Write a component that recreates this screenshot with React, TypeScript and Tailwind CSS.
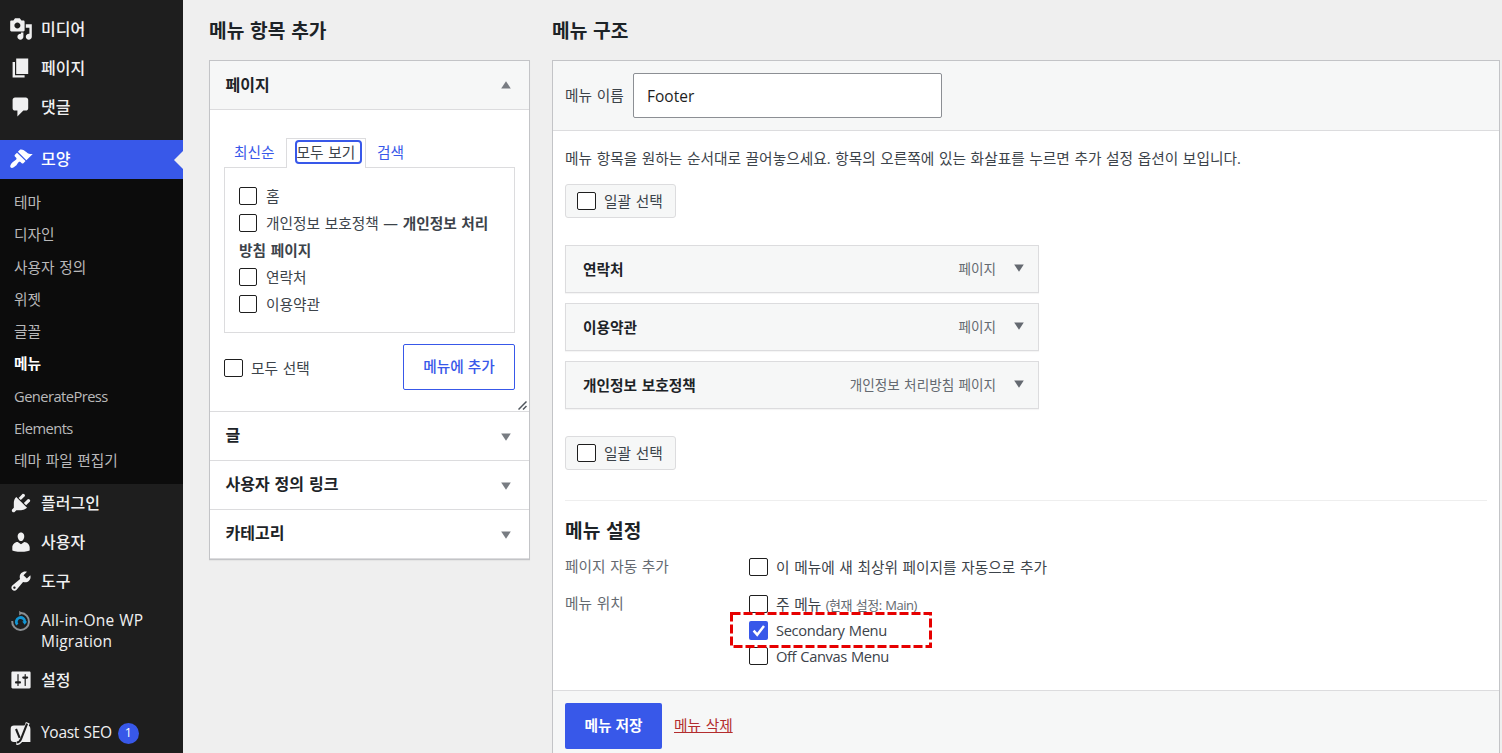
import React from 'react';

interface NavEntry {
  label: string;
  icon: React.ReactNode;
}

const Dashicon: React.FC<{ d: string }> = ({ d }) => (
  <svg viewBox="0 0 20 20" className="w-6 h-6 shrink-0" fill="currentColor">
    <path d={d} />
  </svg>
);

const icons = {
  media:
    'M13 11V4c0-.55-.45-1-1-1h-1.67L9 1H5L3.67 3H2c-.55 0-1 .45-1 1v7c0 .55.45 1 1 1h10c.55 0 1-.45 1-1zM7 4.5c1.38 0 2.5 1.12 2.5 2.5S8.38 9.5 7 9.5 4.5 8.38 4.5 7 5.62 4.5 7 4.5zM14 6h5v10.5c0 1.38-1.12 2.5-2.5 2.5S14 17.88 14 16.5s1.12-2.5 2.5-2.5c.17 0 .34.02.5.05V9h-3V6zm-4 8.05V13h2v3.5c0 1.38-1.12 2.5-2.5 2.5S7 17.88 7 16.5 8.12 14 9.5 14c.17 0 .34.02.5.05z',
  page: 'M6 15V2h10v13H6zm-1 1h8v2H3V5h2v11z',
  comments:
    'M5 2h9c1.1 0 2 .9 2 2v7c0 1.1-.9 2-2 2h-2l-5 5v-5H5c-1.1 0-2-.9-2-2V4c0-1.1.9-2 2-2z',
  appearance:
    'M14.48 11.06L7.41 3.99l1.5-1.5c.5-.56 2.3-.47 3.51.32 1.21.8 1.43 1.28 2.91 2.1 1.18.64 2.45 1.26 4.45.85zm-.71.71L6.7 4.7 4.93 6.47c-.39.39-.39 1.02 0 1.41l1.06 1.06c.39.39.39 1.03 0 1.42-.6.6-1.43 1.11-2.21 1.69-.35.26-.7.53-1.01.84C1.43 14.23.4 16.08 1.4 17.07c.99 1 2.84-.03 4.18-1.36.31-.31.58-.66.85-1.02.57-.78 1.08-1.61 1.69-2.21.39-.39 1.02-.39 1.41 0l1.06 1.06c.39.39 1.02.39 1.41 0z',
  plugins:
    'M13.11 4.36L9.87 7.6 8 5.73l3.24-3.24c.35-.34 1.05-.2 1.56.32.52.51.66 1.21.31 1.55zm-8 1.77l.91-1.12 9.01 9.01-1.19.84c-.71.71-2.63 1.16-3.82 1.16H6.14L4.9 17.26c-.59.59-1.54.59-2.12 0-.59-.58-.59-1.53 0-2.12l1.24-1.24v-3.88c0-1.13.4-3.19 1.09-3.89zm7.26 3.97l3.24-3.24c.34-.35 1.04-.21 1.55.31.52.51.66 1.21.31 1.55l-3.24 3.25z',
  users:
    'M10 9.25c-2.27 0-2.73-3.44-2.73-3.44C7 4.02 7.82 2 9.97 2c2.16 0 2.98 2.02 2.71 3.81 0 0-.41 3.44-2.68 3.44zm0 2.57L12.72 10c2.39 0 4.52 2.33 4.52 4.53v2.49s-3.65 1.13-7.24 1.13c-3.65 0-7.24-1.13-7.24-1.13v-2.49c0-2.25 1.94-4.48 4.47-4.48z',
  tools:
    'M16.68 9.77c-1.34 1.34-3.3 1.67-4.95.99l-5.41 6.52c-.99.99-2.59.99-3.58 0s-.99-2.59 0-3.57l6.52-5.42c-.68-1.65-.35-3.61.99-4.95 1.28-1.28 3.12-1.62 4.72-1.06l-2.89 2.89 2.82 2.82 2.86-2.87c.53 1.58.18 3.39-1.08 4.65zM3.81 16.21c.4.39 1.04.39 1.43 0 .4-.4.4-1.04 0-1.43-.39-.4-1.03-.4-1.43 0-.39.39-.39 1.03 0 1.43z',
  settings:
    'M18 16V4c0-.55-.45-1-1-1H3c-.55 0-1 .45-1 1v12c0 .55.45 1 1 1h14c.55 0 1-.45 1-1zM8 11h1c.55 0 1 .45 1 1s-.45 1-1 1H8v1.5c0 .28-.22.5-.5.5s-.5-.22-.5-.5V13H6c-.55 0-1-.45-1-1s.45-1 1-1h1V5.5c0-.28.22-.5.5-.5s.5.22.5.5V11zm5-2h-1c-.55 0-1-.45-1-1s.45-1 1-1h1V5.5c0-.28.22-.5.5-.5s.5.22.5.5V7h1c.55 0 1 .45 1 1s-.45 1-1 1h-1v5.5c0 .28-.22.5-.5.5s-.5-.22-.5-.5V9z',
};

const MigrationIcon = () => (
  <svg viewBox="0 0 23 23" className="w-[23px] h-[23px] shrink-0" fill="none">
    <path d="M12 3.1A8.4 8.4 0 1 1 3.2 11" stroke="#8a8e91" strokeWidth="2" />
    <path d="M10.2 .8l3.4 2.4-3.4 2.4z" fill="#8a8e91" />
    <path d="M8.3 14.6A4.3 4.3 0 1 1 15.9 12" stroke="#1296d4" strokeWidth="2.8" />
    <path d="M13.2 11.6h5l-2.5 3.2z" fill="#1296d4" />
  </svg>
);

const YoastIcon = () => (
  <svg viewBox="0 0 23 23" className="w-[23px] h-[23px] shrink-0" fill="none">
    <path d="M5 3.500h13a3.400 3.400 0 0 1 3.400 3.400V20H5a3.300 3.300 0 0 1-3.300-3.300V6.800A3.300 3.300 0 0 1 5 3.500z" fill="#f0f0f1" />
    <path d="M18.800 .8l-6.300 16c-1 2.500-2 4.200-5.200 4.300" stroke="#f0f0f1" strokeWidth="4" />
    <path d="M18.100 1.600l-6 15.200c-.9 2.300-1.900 3.500-4.300 3.700" stroke="#1e1e1e" strokeWidth="2.100" />
    <path d="M7 7l3.700 8.800" stroke="#1e1e1e" strokeWidth="2.100" />
  </svg>
);

const topItems: NavEntry[] = [
  { label: '미디어', icon: <Dashicon d={icons.media} /> },
  { label: '페이지', icon: <Dashicon d={icons.page} /> },
  { label: '댓글', icon: <Dashicon d={icons.comments} /> },
];

const subItems = ['테마', '디자인', '사용자 정의', '위젯', '글꼴', '메뉴', 'GeneratePress', 'Elements', '테마 파일 편집기'];

const bottomItems: NavEntry[] = [
  { label: '플러그인', icon: <Dashicon d={icons.plugins} /> },
  { label: '사용자', icon: <Dashicon d={icons.users} /> },
  { label: '도구', icon: <Dashicon d={icons.tools} /> },
];

const menuItems = [
  { title: '연락처', type: '페이지' },
  { title: '이용약관', type: '페이지' },
  { title: '개인정보 보호정책', type: '개인정보 처리방침 페이지' },
];

const NavItem: React.FC<NavEntry> = ({ label, icon }) => (
  <li className="flex h-[39px] items-center gap-2 pl-[9px] text-base font-medium text-[#f0f0f1]">
    {icon}
    <span>{label}</span>
  </li>
);

const Checkbox: React.FC<{ checked?: boolean; small?: boolean }> = ({ checked, small }) =>
  checked ? (
    <span className="flex h-[19px] w-[19px] shrink-0 items-center justify-center rounded-[2px] bg-[#3858e9]">
      <svg viewBox="0 0 19 19" className="h-[19px] w-[19px]" fill="none" stroke="#fff" strokeWidth="2.5">
        <path d="M4.6 9.7l3.600 4L15 5" />
      </svg>
    </span>
  ) : (
    <span
      className={`h-[18px] shrink-0 rounded-[2px] border border-[#1e1e1e] bg-white ${
        small ? 'mr-px w-[18px]' : 'w-[19px]'
      }`}
    />
  );

const Triangle: React.FC<{ up?: boolean; className?: string }> = ({ up, className }) => (
  <svg viewBox="0 0 10 8" className={`h-2 w-2.5 shrink-0 ${className ?? ''}`} fill="currentColor">
    <path d={up ? 'M5 .3L9.800 7.500H.2z' : 'M.2 .5h9.600L5 7.700z'} />
  </svg>
);

const Sidebar = () => (
  <nav className="h-[753px] w-[183px] shrink-0 bg-[#1e1e1e] pt-[9px]">
    <ul>
      {topItems.map((item) => (
        <NavItem key={item.label} {...item} />
      ))}
      <li className="mt-3.5 flex h-[39px] items-center bg-[#3858e9] pl-[9px] text-base font-medium text-white">
        <span className="flex flex-1 items-center gap-2 pb-0.5">
          <Dashicon d={icons.appearance} />
          <span>모양</span>
        </span>
        <svg viewBox="0 0 9 18" className="h-[18px] w-[9px]" fill="#efefef">
          <path d="M9 0v18L0 9z" />
        </svg>
      </li>
    </ul>
    <ul className="h-[305px] bg-[#0c0c0c] pt-[7px]">
      {subItems.map((label) => (
        <li
          key={label}
          className={`flex h-[32.25px] items-center pl-3.5 text-[14.7px] ${
            label === '메뉴' ? 'font-bold text-white' : 'text-[#b9b9ba]'
          } ${/^[A-Z]/.test(label) ? 'tracking-[-0.55px]' : ''}`}
        >
          {label}
        </li>
      ))}
    </ul>
    <ul className="-mt-px">
      {bottomItems.map((item) => (
        <NavItem key={item.label} {...item} />
      ))}
      <li className="flex h-[60px] gap-[9px] pt-2.5 pl-[9px] text-[15.5px] leading-[21px] font-medium tracking-[0.2px] text-[#f0f0f1]">
        <MigrationIcon />
        <span className="w-[120px]">All-in-One WP Migration</span>
      </li>
      <NavItem label="설정" icon={<Dashicon d={icons.settings} />} />
      <li className="mt-3.5 flex h-[39px] items-center pt-px pl-[9px] text-[15.5px] font-medium text-[#f0f0f1]">
        <YoastIcon />
        <span className="ml-[9px] tracking-[-0.3px]">Yoast SEO</span>
        <span className="ml-1.5 flex h-[21px] w-[21px] items-center justify-center rounded-full bg-[#3858e9] text-[12.5px] text-white">
          1
        </span>
      </li>
    </ul>
  </nav>
);

const AddItems = () => (
  <section className="w-[321px] shrink-0">
    <h2 className="flex h-[60px] items-center pt-0.5 text-[19.2px] font-bold text-[#1d2327]">메뉴 항목 추가</h2>
    <div className="h-[500px] border border-[#c3c4c7] bg-white shadow-[0_1px_1px_rgba(0,0,0,0.04)]">
      <div className="flex h-[49px] items-center justify-between border-b border-[#dcdcde] bg-[#f6f7f7] pr-[18px] pl-[15.5px] text-base font-bold text-[#1d2327]">
        <span>페이지</span>
        <Triangle up className="text-[#787c82]" />
      </div>
      <div className="h-[301px] px-3.5 pt-7">
        <div className="flex h-[29px] items-center text-[#3858e9]">
          <span className="w-[62px] pl-2.5">최신순</span>
          <span className="relative z-10 flex h-[30px] w-20 items-center justify-center self-start border border-b-0 border-[#dcdcde] bg-white pl-1">
            <span className="mb-[3px] flex h-6 w-[67px] items-center rounded border-2 border-[#3858e9] whitespace-nowrap text-[#3c434a]">
              모두 보기
            </span>
          </span>
          <span className="pl-[11px]">검색</span>
        </div>
        <div className="h-[166px] border border-[#dcdcde] px-3.5 pt-3.5 leading-[27px]">
          <div className="flex h-[27px] items-center gap-2">
            <Checkbox small />
            <span className="pt-0.5">홈</span>
          </div>
          <div className="flex h-[27px] items-center gap-2">
            <Checkbox small />
            <span className="pt-0.5 whitespace-nowrap">
              개인정보 보호정책 — <b>개인정보 처리</b>
            </span>
          </div>
          <b className="block h-[27px] pt-px">방침 페이지</b>
          <div className="flex h-[27px] items-center gap-2">
            <Checkbox small />
            <span className="pt-0.5">연락처</span>
          </div>
          <div className="flex h-[27px] items-center gap-2">
            <Checkbox small />
            <span className="pt-0.5">이용약관</span>
          </div>
        </div>
        <div className="mt-[11px] flex items-center justify-between">
          <div className="flex items-center gap-2 pt-0.5">
            <Checkbox />
            <span>모두 선택</span>
          </div>
          <button className="h-[46px] w-28 rounded-[2px] border border-[#3858e9] pb-0.5 font-medium text-[#3858e9]">
            메뉴에 추가
          </button>
        </div>
        <svg viewBox="0 0 9 9" className="-mr-3 mt-[11px] ml-auto h-[9px] w-[9px]" stroke="#50575e" strokeWidth="1.5">
          <path d="M.5 8.500l8-8M5 8.500L8.500 5" />
        </svg>
      </div>
      {['글', '사용자 정의 링크', '카테고리'].map((title) => (
        <div
          key={title}
          className="flex h-[49px] items-center justify-between border-t border-[#dcdcde] pr-[18px] pl-[15.5px] text-base font-bold text-[#1d2327]"
        >
          <span className="pb-0.5">{title}</span>
          <Triangle className="mt-px text-[#787c82]" />
        </div>
      ))}
      <div className="h-px bg-[#dcdcde]" />
    </div>
  </section>
);

const BulkSelect = () => (
  <div className="flex h-[34px] w-[111px] items-center gap-2 rounded-[3px] border border-[#dcdcde] bg-[#f6f7f7] pl-[11px]">
    <Checkbox />
    <span>일괄 선택</span>
  </div>
);

const MenuStructure = () => (
  <section className="w-[948px] shrink-0">
    <h2 className="flex h-[60px] items-center pt-0.5 text-[19.2px] font-bold text-[#1d2327]">메뉴 구조</h2>
    <div className="h-[720px] border border-[#c3c4c7] bg-white">
      <div className="flex h-[70px] items-center border-b border-[#dcdcde] bg-[#f6f7f7] pl-3">
        <span className="w-[68px]">메뉴 이름</span>
        <span className="flex h-[45px] w-[309px] items-center rounded-[2px] border border-[#8c8f94] bg-white pt-0.5 pl-[13px] text-[15.5px] text-[#1e1e1e]">
          Footer
        </span>
      </div>
      <div className="h-[559px] px-3 pt-3.5">
        <p className="mb-[13px] leading-[26px] whitespace-nowrap">
          메뉴 항목을 원하는 순서대로 끌어놓으세요. 항목의 오른쪽에 있는 화살표를 누르면 추가 설정 옵션이 보입니다.
        </p>
        <BulkSelect />
        <ul className="mt-[27px] mb-[27px] flex flex-col gap-2.5">
          {menuItems.map((item) => (
            <li
              key={item.title}
              className="flex h-12 w-[474px] items-center border border-[#dcdcde] bg-[#f6f7f7] pr-3.5 pl-[17px] shadow-[0_1px_1px_rgba(0,0,0,0.04)]"
            >
              <span className="flex-1 font-bold text-[#1d2327]">{item.title}</span>
              <span className="mr-[18px] pt-px text-[13.6px] text-[#646970]">{item.type}</span>
              <Triangle className="mb-[3px] text-[#646970]" />
            </li>
          ))}
        </ul>
        <BulkSelect />
        <div className="mt-[30px] border-t border-[#eeeeee] pt-4">
          <h3 className="flex h-7 items-center text-[19.2px] font-bold text-[#1d2327]">메뉴 설정</h3>
          <div className="mt-[9px] flex">
            <span className="-mt-px w-[184px] leading-[26px] text-[#646970]">페이지 자동 추가</span>
            <span className="flex h-[26px] items-center gap-2">
              <Checkbox />
              이 메뉴에 새 최상위 페이지를 자동으로 추가
            </span>
          </div>
          <div className="mt-[11px] flex">
            <span className="-mt-px w-[184px] leading-[26px] text-[#646970]">메뉴 위치</span>
            <div className="relative">
              <div className="flex h-[26px] items-center gap-2">
                <Checkbox />
                <span>
                  주 메뉴 <span className="text-[13px] tracking-[-0.5px] text-[#646970]">(현재 설정: Main)</span>
                </span>
              </div>
              <div className="flex h-[26px] items-center gap-2 tracking-[-0.35px]">
                <Checkbox checked />
                Secondary Menu
              </div>
              <div className="flex h-[26px] items-center gap-2 tracking-[-0.4px]">
                <Checkbox />
                Off Canvas Menu
              </div>
              {/* highlight around the selected location */}
              <svg viewBox="0 0 202 36" className="absolute top-[21px] -left-[19px] h-9 w-[202px]" fill="none">
                <rect x="1.5" y="1.5" width="199" height="33" stroke="#e60000" strokeWidth="3" strokeDasharray="9 3" />
              </svg>
            </div>
          </div>
        </div>
      </div>
      <div className="flex h-24 items-start border-t border-[#dcdcde] bg-[#f6f7f7] pt-3 pl-3">
        <button className="h-[46px] w-[97px] rounded-[2px] bg-[#3858e9] pb-0.5 font-semibold text-white">메뉴 저장</button>
        <a className="ml-3 leading-[45px] text-[#b32d2e] underline">메뉴 삭제</a>
      </div>
    </div>
  </section>
);

export default function App() {
  return (
    <div className="flex h-[753px] w-[1502px] overflow-hidden bg-[#efefef] font-['Open_Sans','Noto_Sans_CJK_KR',sans-serif] text-[14.7px] [word-spacing:0.8px] text-[#3c434a]">
      <Sidebar />
      <main className="flex gap-[22px] pl-[26px]">
        <AddItems />
        <MenuStructure />
      </main>
    </div>
  );
}
